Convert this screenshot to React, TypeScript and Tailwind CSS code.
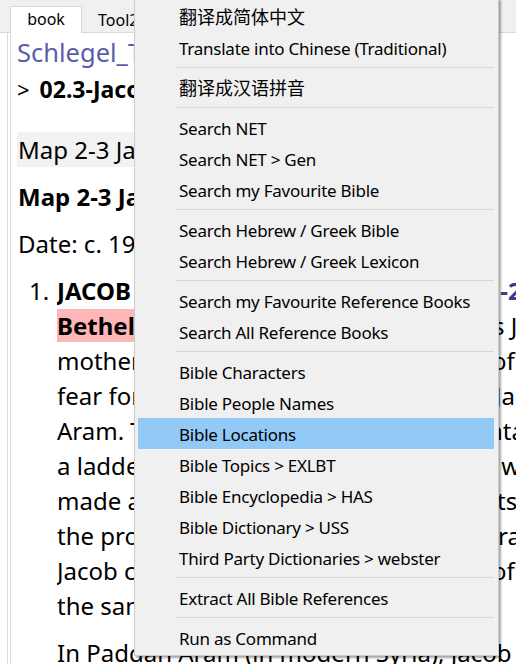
import React from "react";

type Item = { label: string; active?: boolean; cjk?: boolean } | "sep";

const menu: Item[] = [
  { label: "翻译成简体中文", cjk: true },
  { label: "Translate into Chinese (Traditional)" },
  "sep",
  { label: "翻译成汉语拼音", cjk: true },
  "sep",
  { label: "Search NET" },
  { label: "Search NET > Gen" },
  { label: "Search my Favourite Bible" },
  "sep",
  { label: "Search Hebrew / Greek Bible" },
  { label: "Search Hebrew / Greek Lexicon" },
  "sep",
  { label: "Search my Favourite Reference Books" },
  { label: "Search All Reference Books" },
  "sep",
  { label: "Bible Characters" },
  { label: "Bible People Names" },
  { label: "Bible Locations", active: true },
  { label: "Bible Topics > EXLBT" },
  { label: "Bible Encyclopedia > HAS" },
  { label: "Bible Dictionary > USS" },
  { label: "Third Party Dictionaries > webster" },
  "sep",
  { label: "Extract All Bible References" },
  "sep",
  { label: "Run as Command" },
];

// list lines: left part shows before the menu, right part peeks out past it
const lines: { left: React.ReactNode; right: string; rightCls: string }[] = [
  { left: <b>JACOB FLEES TO HARAN (Gen 27:41-28:22)</b>, right: "\u00a0-28", rightCls: "ml-[2px] font-bold text-[#3b3b8f]" },
  {
    left: (
      <>
        <b className="bg-[#ffb6b6]">Bethel</b> Because of Esau’s threats, Jacob’s
      </>
    ),
    right: "s Ja",
    rightCls: "ml-[1px]",
  },
  { left: "mother sent him to her brother Laban of", right: "of J", rightCls: "" },
  { left: "fear for his life, Jacob fled toward Paddan", right: "Jac", rightCls: "ml-[3px]" },
  { left: "Aram. The first night he stopped and slept", right: "nta", rightCls: "-ml-[4px]" },
  { left: "a ladder reaching up to heaven, where God", right: " wa", rightCls: "ml-[3px]" },
  { left: "made a covenant with him; his descendants", right: "ts ", rightCls: "ml-[5px]" },
  { left: "the promised land and blessed through Abra", right: "ra", rightCls: "ml-[6px]" },
  { left: "Jacob called the place Bethel, the house of", right: "of t", rightCls: "" },
  { left: "the same place his grandfather Abraham", right: "", rightCls: "" },
];

export default function App() {
  return (
    <div className="relative w-[516px] h-[664px] overflow-hidden bg-white text-black font-['Noto_Sans','Open_Sans',sans-serif]">
      {/* tab bar */}
      <div className="flex items-end h-[33px] bg-[#f0f0f0] border-b border-[#d9d9d9] pl-[10px]">
        <div className="w-[72px] h-[27px] -mb-px bg-white border border-b-0 border-[#d9d9d9] flex items-center justify-center text-[16px] leading-none pb-[2px]">
          book
        </div>
        <div className="pl-[16px] h-[24px] flex items-center text-[16px] leading-none">Tool2</div>
      </div>

      <div className="flex">
        <div className="w-[8px] border-r border-[#dadada] h-[640px]" />
        <div className="w-[3px] border-r border-[#dadada] h-[640px]" />
        <div className="flex-1 min-w-0 pl-[6px]">
          <div className="h-[38px] text-[25.5px] leading-[38px] text-[#5b5ea6] whitespace-nowrap">Schlegel_Timeline</div>
          <div className="h-[36px] text-[22px] leading-[36px] whitespace-nowrap flex">
            <span>&gt;</span>
            <b className="ml-[10px] text-[23px]">02.3-Jacob</b>
          </div>
          <div className="mt-[25px] w-[440px] h-[35px] bg-[#f2f2f2] text-[24px] leading-[35px] whitespace-nowrap pl-[1px]">
            Map 2-3 Jacob’s Journeys
          </div>
          <div className="mt-[12px] h-[35px] text-[24px] leading-[35px] font-bold whitespace-nowrap pl-[1px]">
            Map 2-3 Jacob’s Journeys
          </div>
          <div className="mt-[12px] h-[35px] text-[24px] leading-[35px] whitespace-nowrap pl-[1px]">
            Date: c. 1929–1909 BC
          </div>
          <div className="mt-[12px] flex text-[24px] leading-[35px]">
            <div className="w-[40px] pl-[12px] shrink-0">1.</div>
            <div className="flex-1 min-w-0">
              {lines.map((l, i) => (
                <div key={i} className="flex h-[35px] whitespace-nowrap">
                  <div className="w-[435px] overflow-hidden">{l.left}</div>
                  <div className="w-[24px] overflow-hidden whitespace-pre">
                    <span className={`inline-block ${l.rightCls}`}>{l.right}</span>
                  </div>
                </div>
              ))}
            </div>
          </div>
          <div className="mt-[12px] pl-[40px] h-[35px] text-[24px] leading-[35px] whitespace-nowrap">
            In Paddan Aram (in modern Syria), Jacob worked
          </div>
        </div>
      </div>

      {/* context menu */}
      <div className="absolute left-[134px] top-[-2px] w-[365px] bg-[#f0f0f0] border border-[#cccccc] shadow-[2px_2px_2px_rgba(0,0,0,0.35)] py-[2px] font-['Noto_Sans','Noto_Sans_CJK_SC',sans-serif]">
        {menu.map((m, i) =>
          m === "sep" ? (
            <div key={i} className="h-[9px] flex items-center ml-[40px] mr-[4px]">
              <div className="h-px w-full bg-[#d7d7d7]" />
            </div>
          ) : (
            <div
              key={i}
              className={`h-[31px] ml-[3px] mr-[4px] pl-[41px] flex items-center whitespace-nowrap leading-none ${
                m.cjk ? "text-[18px]" : "text-[17px] tracking-[-0.25px] pt-[2px]"
              } ${m.active ? "bg-[#91c9f7]" : ""}`}
            >
              {m.label}
            </div>
          )
        )}
      </div>
    </div>
  );
}
